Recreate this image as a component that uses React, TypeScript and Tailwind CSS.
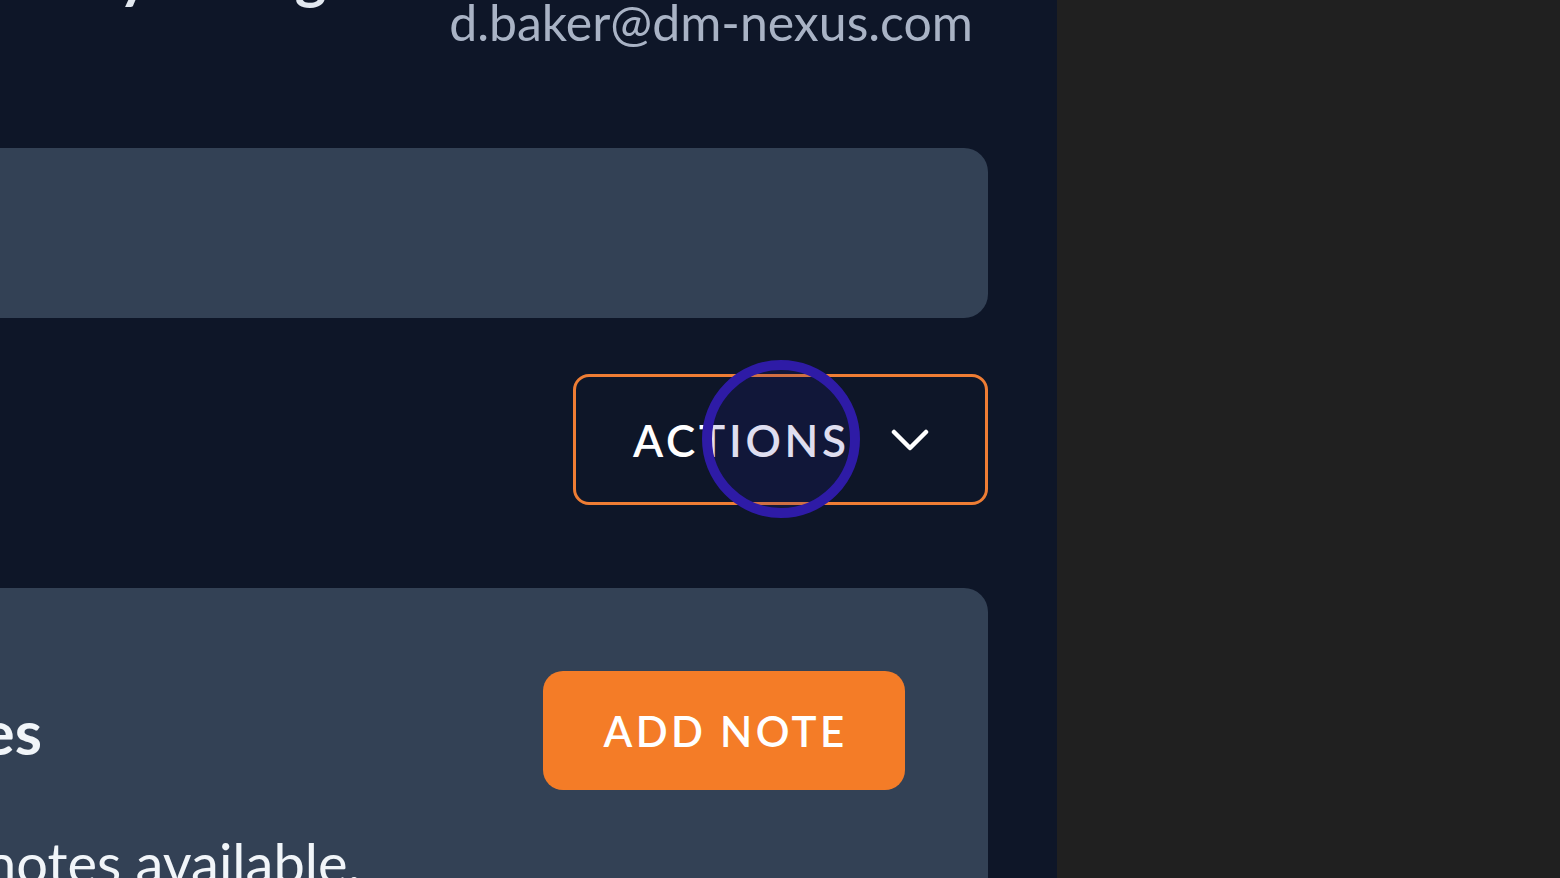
import React from 'react';

function Chevron() {
  return (
    <svg width="38" height="24" viewBox="0 0 38 24" fill="none" stroke="currentColor" strokeWidth="4.5" strokeLinecap="round" strokeLinejoin="round">
      <polyline points="3,4 19,20 35,4" />
    </svg>
  );
}

export default function App() {
  return (
    <div className="flex h-[878px] w-[1560px] overflow-hidden font-['Lato',sans-serif]">
      <main className="relative w-[1057px] shrink-0 overflow-hidden bg-[#0e1628] pr-[69px]">
        <div className="-ml-[200px] flex flex-col">
          {/* header */}
          <header className="flex h-[56px] items-start justify-between pr-[15px]">
            <h1 className="-mt-[56px] pl-[222px] text-[60px] font-bold leading-none text-slate-200">
              Gary Young
            </h1>
            <p className="-mt-[3px] text-[50px] font-normal leading-none text-[#a9b3c5]">
              d.baker@dm-nexus.com
            </p>
          </header>

          {/* info card */}
          <section className="mt-[92px] h-[170px] rounded-[24px] bg-[#334155]" />

          {/* actions */}
          <div className="mt-[56px] flex justify-end">
            <button className="relative flex h-[131px] w-[415px] items-center gap-[41px] rounded-[16px] border-[3px] border-[#ee7d34] pl-[57px] text-white">
              <span className="text-[44px] font-semibold leading-none tracking-[0.085em]">ACTIONS</span>
              <Chevron />
              {/* click indicator */}
              <span className="pointer-events-none absolute left-[126px] top-[-17px] size-[158px] rounded-full border-[10px] border-[#2e1ba6] bg-[#2a1f9a]/15" />
            </button>
          </div>

          {/* notes card */}
          <section className="mt-[83px] h-[400px] rounded-[24px] bg-[#334155] pl-[77px] pr-[83px] pt-[83px]">
            <div className="flex items-center justify-between">
              <h2 className="text-[62px] font-bold leading-none text-slate-100">Notes</h2>
              <button className="flex h-[119px] w-[362px] items-center justify-center rounded-[20px] bg-[#f47c27] pl-[3px] text-[42px] font-semibold leading-none tracking-[0.08em] text-white">
                ADD NOTE
              </button>
            </div>
            <p className="ml-[20px] mt-[45px] text-[56px] leading-none text-slate-100">No notes available.</p>
          </section>
        </div>
      </main>
      <aside className="flex-1 bg-[#202020]" />
    </div>
  );
}
